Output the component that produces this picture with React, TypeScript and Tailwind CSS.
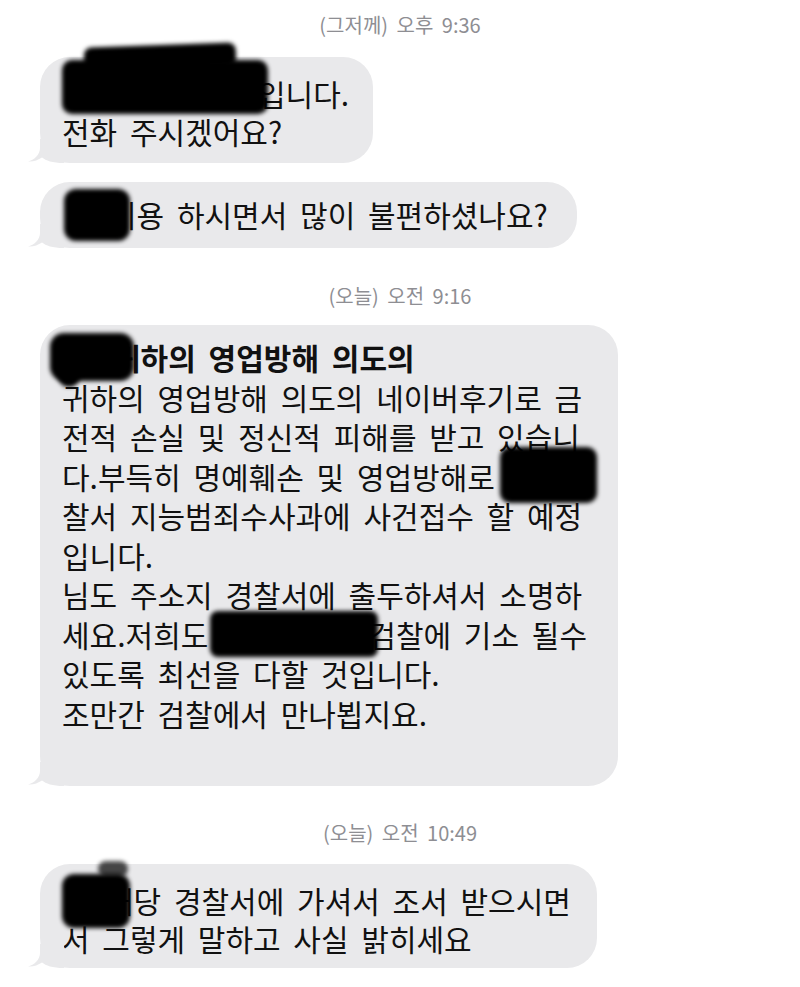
import React from 'react';

// grey bubble tail at the bottom left corner
const Tail = () => (
  <svg className="absolute left-[-12px] bottom-0" width="36" height="24" viewBox="0 0 36 24">
    <path d="M12 0 L12 9 C12 16 6 21 0 22.5 C5 23 10 21 14 18.5 C18 21.5 24 24 36 24 L36 0 Z" fill="#e9e9eb" />
  </svg>
);

const Stamp = ({ children }: { children: React.ReactNode }) => (
  <div className="self-stretch text-center text-[20px] leading-[24px] text-[#8e8e93] [word-spacing:4px]">{children}</div>
);

// black marker scribble over private text
const Blot = ({ className }: { className: string }) => (
  <div className={'absolute bg-black blur-[2px] ' + className} />
);

const Bubble = ({ className, children }: { className: string; children: React.ReactNode }) => (
  <div className={'relative ml-[40px] flex flex-col whitespace-pre rounded-[30px] bg-[#e9e9eb] pl-[22px] ' + className}>
    <Tail />
    {children}
  </div>
);

export default function App() {
  return (
    <div className="flex w-[800px] min-h-[987px] flex-col items-start bg-white pt-[13px] font-['Noto_Sans_CJK_KR','Noto_Sans',sans-serif] text-[30px] leading-[38px] text-[#111] [word-spacing:6px]">
      <Stamp>(그저께) 오후 9:36</Stamp>

      <Bubble className="mt-[20px] w-[333px] pt-[17px] pb-[13px]">
        <div>
          <span className="inline-block w-[196px]" />입니다.
        </div>
        <div>전화 주시겠어요?</div>
        <Blot className="left-[22px] top-[3px] w-[206px] h-[54px] rounded-[10px]" />
        <Blot className="left-[44px] top-[-12px] w-[152px] h-[24px] rounded-[8px] -rotate-2" />
      </Bubble>

      <Bubble className="mt-[19px] w-[537px] pt-[13px] pb-[15px]">
        <div>
          <span className="inline-block w-[47px]" />이용 하시면서 많이 불편하셨나요?
        </div>
        <Blot className="left-[24px] top-[7px] w-[66px] h-[52px] rounded-[12px]" />
      </Bubble>

      <div className="mt-[36px] self-stretch">
        <Stamp>(오늘) 오전 9:16</Stamp>
      </div>

      {/* long message with subject line */}
      <Bubble className="mt-[17px] w-[578px] pt-[13px] pb-[53px] leading-[39.5px]">
        <div className="font-bold">
          <span className="inline-block w-[51px]" />귀하의 영업방해 의도의
        </div>
        <div>귀하의 영업방해 의도의 네이버후기로 금</div>
        <div>전적 손실 및 정신적 피해를 받고 있습니</div>
        <div>다.부득히 명예훼손 및 영업방해로</div>
        <div>찰서 지능범죄수사과에 사건접수 할 예정</div>
        <div>입니다.</div>
        <div>님도 주소지 경찰서에 출두하셔서 소명하</div>
        <div>
          세요.저희도<span className="inline-block w-[160px]" />검찰에 기소 될수
        </div>
        <div>있도록 최선을 다할 것입니다.</div>
        <div>조만간 검찰에서 만나뵙지요.</div>
        <Blot className="left-[10px] top-[8px] w-[84px] h-[48px] rounded-[14px]" />
        <Blot className="left-[18px] top-[40px] w-[22px] h-[22px] rounded-full" />
        <Blot className="left-[460px] top-[122px] w-[97px] h-[56px] rounded-[10px]" />
        <Blot className="left-[170px] top-[286px] w-[168px] h-[46px] rounded-[8px]" />
      </Bubble>

      <div className="mt-[35px] self-stretch">
        <Stamp>(오늘) 오전 10:49</Stamp>
      </div>

      <Bubble className="mt-[19px] w-[557px] pt-[17px] pb-[11px]">
        <div>
          <span className="inline-block w-[44px]" />해당 경찰서에 가셔서 조서 받으시면
        </div>
        <div>서 그렇게 말하고 사실 밝히세요</div>
        <Blot className="left-[22px] top-[10px] w-[68px] h-[54px] rounded-[12px]" />
        <Blot className="left-[58px] top-[-3px] w-[30px] h-[16px] rounded-[8px] opacity-70" />
      </Bubble>
    </div>
  );
}
